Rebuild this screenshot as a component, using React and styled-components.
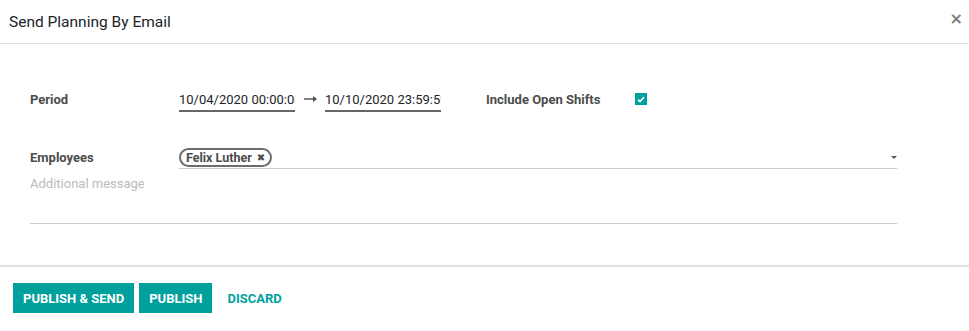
import React from "react";
import styled, { createGlobalStyle } from "styled-components";

const GlobalStyle = createGlobalStyle`
  body {
    margin: 0;
    background: #fff;
    font-family: Roboto, "Noto Sans", sans-serif;
    font-size: 13px;
    color: #4c4c4c;
  }
`;

const Dialog = styled.div`
  width: 969px;
  height: 331px;
  display: flex;
  flex-direction: column;
  background: #fff;
`;

const Header = styled.header`
  height: 43px;
  display: flex;
  align-items: center;
  justify-content: space-between;
  padding: 0 6px 0 9px;
  border-bottom: 1px solid #dee2e6;
`;

const Title = styled.h4`
  margin: 0;
  font-size: 15.5px;
  font-weight: 400;
  color: #212529;
`;

const Close = styled.button`
  border: 0;
  background: none;
  padding: 0;
  margin: 0 0 5px 0;
  font-size: 16px;
  font-weight: 700;
  line-height: 1;
  color: #7c7c7c;
  font-family: "DejaVu Sans", sans-serif;
`;

const Body = styled.main`
  flex: 1;
  padding: 42px 72px 0 30px;
`;

const Groups = styled.div`
  display: grid;
  grid-template-columns: 456px 1fr;
`;

const Row = styled.div`
  display: grid;
  grid-template-columns: 149px 1fr;
  align-items: center;
  min-height: 26px;
`;

const Label = styled.label`
  font-weight: 700;
  color: #4c4c4c;
`;

const DateRange = styled.div`
  display: flex;
  align-items: center;
`;

const DateInput = styled.input`
  box-sizing: border-box;
  width: 116px;
  height: 26px;
  padding: 2px 0 0;
  border: 0;
  border-bottom: 2px solid #666;
  outline: none;
  font-family: Roboto, sans-serif;
  font-size: 13px;
  color: #212529;
  background: transparent;
`;

const Arrow = styled.span`
  width: 30px;
  display: flex;
  justify-content: center;
  color: #4c4c4c;
`;

const Check = styled.span`
  width: 12px;
  height: 12px;
  display: flex;
  align-items: center;
  justify-content: center;
  background: #00a09d;
`;

const EmployeesRow = styled.div`
  display: grid;
  grid-template-columns: 149px 1fr;
  align-items: center;
  margin-top: 34px;
`;

const TagField = styled.div`
  display: flex;
  align-items: center;
  justify-content: space-between;
  height: 22px;
  border-bottom: 1px solid #ccc;
`;

const Tag = styled.span`
  display: inline-flex;
  align-items: center;
  gap: 5px;
  height: 13px;
  padding: 1px 5px;
  border: 2px solid #6c6c6c;
  border-radius: 10px;
  font-size: 12.5px;
  font-weight: 700;
  color: #4c4c4c;
`;

const TagRemove = styled.span`
  font-size: 10px;
  font-family: "DejaVu Sans", sans-serif;
`;

const Caret = styled.span`
  width: 0;
  height: 0;
  border-left: 3px solid transparent;
  border-right: 3px solid transparent;
  border-top: 3px solid #555;
`;

const Message = styled.div`
  height: 47px;
  margin-top: 4px;
  border-bottom: 1px solid #ccc;
  color: #bbb;
  padding-top: 3px;
`;

const Footer = styled.footer`
  display: flex;
  align-items: center;
  gap: 5px;
  padding: 16px 13px 18px;
  border-top: 2px solid #dee2e6;
`;

const Button = styled.button`
  height: 30px;
  padding: 0 10px;
  border: 0;
  font-family: Roboto, sans-serif;
  font-size: 13px;
  font-weight: 700;
  text-transform: uppercase;
  background: ${(p) => (p.$link ? "transparent" : "#00a09d")};
  color: ${(p) => (p.$link ? "#00a09d" : "#fff")};
`;

export default function App() {
  return (
    <Dialog>
      <GlobalStyle />
      <Header>
        <Title>Send Planning By Email</Title>
        <Close>×</Close>
      </Header>
      <Body>
        <Groups>
          <Row>
            <Label>Period</Label>
            <DateRange>
              <DateInput readOnly value="10/04/2020 00:00:00" />
              <Arrow>
                <svg width="13" height="6" viewBox="0 0 13 6">
                  <path d="M0 3h10" stroke="#4c4c4c" strokeWidth="1.4" />
                  <path d="M9 0l4 3-4 3z" fill="#4c4c4c" />
                </svg>
              </Arrow>
              <DateInput readOnly value="10/10/2020 23:59:59" />
            </DateRange>
          </Row>
          <Row>
            <Label>Include Open Shifts</Label>
            <Check>
              <svg width="8" height="7" viewBox="0 0 8 7">
                <path d="M1 3.6l2 2 4-4.5" stroke="#fff" strokeWidth="1.6" fill="none" />
              </svg>
            </Check>
          </Row>
        </Groups>
        <EmployeesRow>
          <Label>Employees</Label>
          <TagField>
            <Tag>
              Felix Luther
              <TagRemove>✖</TagRemove>
            </Tag>
            <Caret />
          </TagField>
        </EmployeesRow>
        <Message>Additional message</Message>
      </Body>
      <Footer>
        <Button>Publish &amp; Send</Button>
        <Button>Publish</Button>
        <Button $link>Discard</Button>
      </Footer>
    </Dialog>
  );
}
